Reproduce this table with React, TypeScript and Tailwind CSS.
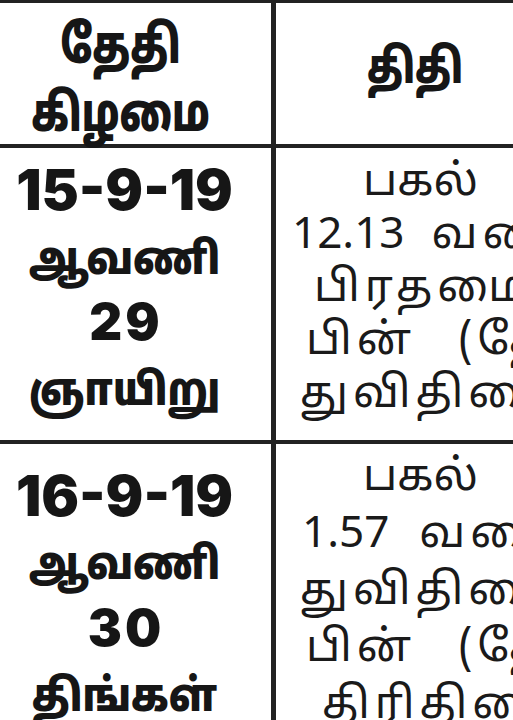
const tamil = "font-['Noto_Sans_Tamil','Lohit_Tamil','Noto_Sans','Liberation_Sans',sans-serif]";
const digits = "font-['Inter','Liberation_Sans',sans-serif]";

type Line = { words: string[]; pad: string; gap?: string };

function DateCell({ date, month, day, weekday, top }: { date: string; month: string; day: string; weekday: string; top: string }) {
  return (
    <div className={`flex flex-col items-center pr-[22px] text-[#161616] ${top}`}>
      <div className={`${digits} text-[56px] font-black leading-[66px]`}>{date}</div>
      <div className={`${tamil} translate-y-[6px] scale-y-[1.15] text-[39px] font-black leading-[66px]`}>{month}</div>
      <div className={`${digits} pl-[3px] text-[51px] font-black leading-[66px] tracking-[3px]`}>{day}</div>
      <div className={`${tamil} translate-y-[6px] scale-y-[1.15] text-[39px] font-black leading-[66px]`}>{weekday}</div>
    </div>
  );
}

const isNumber = (w: string) => /^[0-9.]+$/.test(w);

function TithiCell({ lines, top, leading }: { lines: Line[]; top: string; leading: string }) {
  return (
    <div className={`${tamil} flex flex-col text-[44px] text-[#1a1a1a] ${top} ${leading}`}>
      {lines.map((l, i) => (
        <div key={i} className={`flex whitespace-nowrap ${l.pad} ${l.gap ?? ""}`}>
          {l.words.map((w, j) => (
            <span key={j} className={isNumber(w) || !l.gap ? "" : "tracking-[5px]"}>
              {w}
            </span>
          ))}
        </div>
      ))}
    </div>
  );
}

export default function App() {
  return (
    <div className="h-[720px] w-[513px] overflow-hidden bg-white">
      <div className="w-[566px] border-t-[3px] border-[#222]">
        {/* header */}
        <div className="flex h-[145px] border-b-[4px] border-[#222]">
          <div className={`${tamil} flex w-[276px] shrink-0 flex-col items-center border-r-[5px] border-[#222] pt-[12px] pr-[30px] text-[39px] font-black leading-[68px] text-[#161616]`}>
            <div className="scale-y-[1.35]">தேதி</div>
            <div className="scale-y-[1.35]">கிழமை</div>
          </div>
          <div className={`${tamil} flex w-[289px] shrink-0 items-center justify-start pb-[2px] pl-[91px] text-[37px] font-black text-[#161616]`}>
            <span className="scale-y-[1.3]">திதி</span>
          </div>
        </div>

        {/* row 1 */}
        <div className="flex h-[296px] border-b-[4px] border-[#222]">
          <div className="w-[276px] shrink-0 border-r-[5px] border-[#222]">
            <DateCell date="15-9-19" month="ஆவணி" day="29" weekday="ஞாயிறு" top="pt-[9px]" />
          </div>
          <div className="w-[289px] shrink-0 overflow-hidden">
            <TithiCell
              top="pt-[10px]"
              leading="leading-[53px]"
              lines={[
                { words: ["பகல்"], pad: "pl-[87px]" },
                { words: ["12.13", "வரை"], pad: "pl-[16px]", gap: "gap-[27px]" },
                { words: ["பிரதமை"], pad: "pl-[38px]", gap: "gap-0" },
                { words: ["பின்", "(தேய்பிறை)"], pad: "pl-[30px]", gap: "gap-[42px]" },
                { words: ["துவிதியை"], pad: "pl-[24px]", gap: "gap-0" },
              ]}
            />
          </div>
        </div>

        {/* row 2 */}
        <div className="flex h-[300px]">
          <div className="w-[276px] shrink-0 border-r-[5px] border-[#222]">
            <DateCell date="16-9-19" month="ஆவணி" day="30" weekday="திங்கள்" top="pt-[19px]" />
          </div>
          <div className="w-[289px] shrink-0 overflow-hidden">
            <TithiCell
              top="pt-[7px]"
              leading="leading-[57px]"
              lines={[
                { words: ["பகல்"], pad: "pl-[87px]" },
                { words: ["1.57", "வரை"], pad: "pl-[26px]", gap: "gap-[30px]" },
                { words: ["துவிதியை"], pad: "pl-[24px]", gap: "gap-0" },
                { words: ["பின்", "(தேய்பிறை)"], pad: "pl-[30px]", gap: "gap-[42px]" },
                { words: ["திரிதியை"], pad: "pl-[46px]", gap: "gap-0" },
              ]}
            />
          </div>
        </div>
      </div>
    </div>
  );
}
